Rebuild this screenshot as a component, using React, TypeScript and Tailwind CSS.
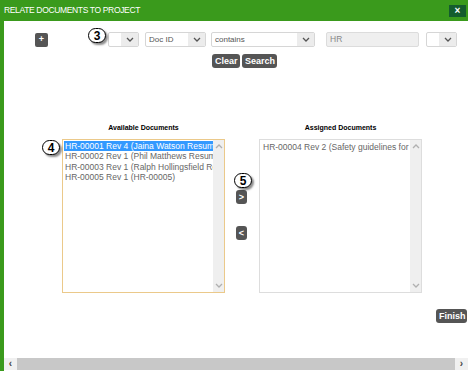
import React from 'react';

const Chevron = ({ up = false, color = '#555' }: { up?: boolean; color?: string }) => (
  <svg width="8" height="5" viewBox="0 0 8 5" className={up ? 'rotate-180' : ''}>
    <polyline points="1,1 4,4 7,1" fill="none" stroke={color} strokeWidth="1.3" />
  </svg>
);

const Select = ({ value, width }: { value?: string; width: string }) => (
  <div className={`${width} h-[15px] flex items-center border border-[#d6d6d6] rounded-[2px] bg-white overflow-hidden`}>
    <span className="flex-1 px-[3px] text-[8px] text-[#555] leading-none truncate">{value}</span>
    <div className="w-[17px] h-full flex items-center justify-center bg-[#ececec]">
      <Chevron />
    </div>
  </div>
);

const Badge = ({ n, className }: { n: number; className: string }) => (
  <div
    className={`absolute w-[18px] h-[15px] rounded-full border-[1.5px] border-black bg-white flex items-center justify-center text-[12px] font-bold leading-none text-black shadow-[2px_2px_2px_rgba(0,0,0,0.45)] ${className}`}
  >
    {n}
  </div>
);

const DarkButton = ({ label, className = '' }: { label: string; className?: string }) => (
  <button className={`h-[14px] px-[3px] bg-[#555] rounded-[3px] text-white text-[9px] font-bold leading-none ${className}`}>
    {label}
  </button>
);

const ListScroll = () => (
  <div className="w-[11px] h-full bg-[#efefef] flex flex-col items-center justify-between py-[4px]">
    <Chevron up color="#b0b0b0" />
    <Chevron color="#b0b0b0" />
  </div>
);

const available = [
  'HR-00001 Rev 4 (Jaina Watson Resume)',
  'HR-00002 Rev 1 (Phil Matthews Resume)',
  'HR-00003 Rev 1 (Ralph Hollingsfield Resume)',
  'HR-00005 Rev 1 (HR-00005)',
];

export default function App() {
  return (
    <div className="w-[468px] h-[371px] flex flex-col overflow-hidden bg-white font-['Liberation_Sans',Arial,sans-serif]">
      {/* Header */}
      <div className="h-[21px] bg-[#3a9a1c] flex items-center justify-between pl-[4px] pr-[2px]">
        <span className="text-white text-[8.5px] tracking-[-0.35px] leading-none">RELATE DOCUMENTS TO PROJECT</span>
        <div className="w-[17px] h-[12px] bg-[#145c2e] flex items-center justify-center text-white text-[10px] font-bold leading-none">
          ×
        </div>
      </div>

      <div className="flex-1 flex">
        <div className="w-[4px] bg-[#3a9a1c]" />
        <div className="flex-1 flex flex-col relative">
          {/* Filter row */}
          <div className="flex items-center mt-[11px] ml-[31px]">
            <button className="w-[13px] h-[14px] bg-[#555] rounded-[2px] text-white text-[9px] font-bold leading-none flex items-center justify-center">
              +
            </button>
            <Select width="w-[31px] ml-[60px]" />
            <Select value="Doc ID" width="w-[61px] ml-[6px]" />
            <Select value="contains" width="w-[104px] ml-[5px]" />
            <div className="w-[93px] h-[15px] ml-[11px] bg-[#efefef] border border-[#dcdcdc] rounded-[2px] flex items-center px-[3px] text-[8.5px] text-[#888] leading-none">
              HR
            </div>
            <Select width="w-[31px] ml-[7px]" />
          </div>
          <Badge n={3} className="left-[84px] top-[7px]" />

          <div className="flex gap-[2px] mt-[7px] ml-[208px]">
            <DarkButton label="Clear" className="w-[28px]" />
            <DarkButton label="Search" className="w-[35px]" />
          </div>

          {/* Lists */}
          <div className="flex mt-[56px] ml-[58px]">
            <div className="w-[163px] flex flex-col items-center">
              <div className="h-[8px] text-[7px] font-bold text-black leading-none">Available Documents</div>
              <div className="mt-[7px] w-full h-[154px] border-[1.5px] border-[#ebc98a] flex">
                <div className="flex-1 pt-[1px] pl-[1px] overflow-hidden">
                  {available.map((d, i) => (
                    <div
                      key={d}
                      className={`h-[10.4px] text-[8.5px] leading-[10.4px] whitespace-nowrap overflow-hidden pl-[1px] ${
                        i === 0 ? 'bg-[#3399ff] text-white' : 'text-[#666]'
                      }`}
                    >
                      {d}
                    </div>
                  ))}
                </div>
                <ListScroll />
              </div>
            </div>

            <div className="w-[34px] flex flex-col items-center pt-[66px]">
              <DarkButton label=">" className="w-[11px] !px-0 ml-[-1px]" />
              <DarkButton label="<" className="w-[11px] !px-0 mt-[22px] ml-[-1px]" />
            </div>

            <div className="w-[163px] flex flex-col items-center">
              <div className="h-[8px] text-[7px] font-bold text-black leading-none">Assigned Documents</div>
              <div className="mt-[7px] w-full h-[154px] border border-[#dddddd] flex">
                <div className="flex-1 pt-[2px] pl-[3px] overflow-hidden">
                  <div className="h-[10.4px] text-[8.5px] leading-[10.4px] whitespace-nowrap overflow-hidden text-[#666]">
                    HR-00004 Rev 2 (Safety guidelines for construction)
                  </div>
                </div>
                <ListScroll />
              </div>
            </div>
          </div>
          <Badge n={4} className="left-[38px] top-[119px]" />
          <Badge n={5} className="left-[230px] top-[152px]" />

          <div className="flex justify-end mt-[16px] pr-[1px]">
            <DarkButton label="Finish" className="w-[31px]" />
          </div>

          <div className="flex-1" />

          {/* Horizontal scrollbar */}
          <div className="h-[12px] mb-[1px] flex items-stretch">
            <div className="w-[13px] bg-[#f0f0f0] flex items-center justify-center text-[10px] font-bold text-[#444] leading-none">‹</div>
            <div className="flex-1 bg-[#c8c8c8]" />
            <div className="w-[13px] bg-[#f0f0f0] flex items-center justify-center text-[10px] font-bold text-[#444] leading-none">›</div>
          </div>
        </div>
      </div>
    </div>
  );
}
